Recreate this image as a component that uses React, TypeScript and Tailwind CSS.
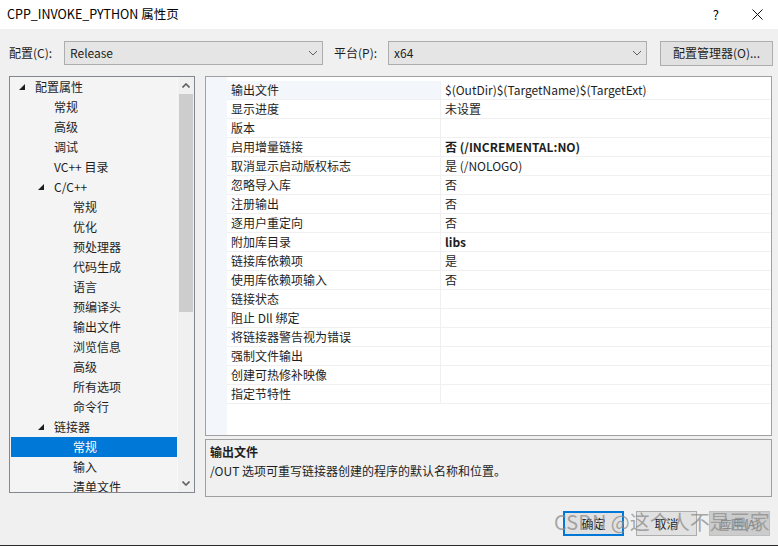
import React from 'react';

const treeItems: { label: string; level: number; open?: boolean; selected?: boolean }[] = [
  { label: '配置属性', level: 0, open: true },
  { label: '常规', level: 1 },
  { label: '高级', level: 1 },
  { label: '调试', level: 1 },
  { label: 'VC++ 目录', level: 1 },
  { label: 'C/C++', level: 1, open: true },
  { label: '常规', level: 2 },
  { label: '优化', level: 2 },
  { label: '预处理器', level: 2 },
  { label: '代码生成', level: 2 },
  { label: '语言', level: 2 },
  { label: '预编译头', level: 2 },
  { label: '输出文件', level: 2 },
  { label: '浏览信息', level: 2 },
  { label: '高级', level: 2 },
  { label: '所有选项', level: 2 },
  { label: '命令行', level: 2 },
  { label: '链接器', level: 1, open: true },
  { label: '常规', level: 2, selected: true },
  { label: '输入', level: 2 },
  { label: '清单文件', level: 2 },
];

const props: { name: string; value: string; bold?: boolean }[] = [
  { name: '输出文件', value: '$(OutDir)$(TargetName)$(TargetExt)' },
  { name: '显示进度', value: '未设置' },
  { name: '版本', value: '' },
  { name: '启用增量链接', value: '否 (/INCREMENTAL:NO)', bold: true },
  { name: '取消显示启动版权标志', value: '是 (/NOLOGO)' },
  { name: '忽略导入库', value: '否' },
  { name: '注册输出', value: '否' },
  { name: '逐用户重定向', value: '否' },
  { name: '附加库目录', value: 'libs', bold: true },
  { name: '链接库依赖项', value: '是' },
  { name: '使用库依赖项输入', value: '否' },
  { name: '链接状态', value: '' },
  { name: '阻止 Dll 绑定', value: '' },
  { name: '将链接器警告视为错误', value: '' },
  { name: '强制文件输出', value: '' },
  { name: '创建可热修补映像', value: '' },
  { name: '指定节特性', value: '' },
];

const Chevron = () => (
  <svg width="10" height="6" viewBox="0 0 10 6" className="text-[#606060]">
    <path d="M1 1 L5 5 L9 1" fill="none" stroke="currentColor" strokeWidth="1" />
  </svg>
);

const Tri = () => (
  <svg width="6" height="6" viewBox="0 0 6 6">
    <path d="M6 0 L6 6 L0 6 Z" fill="#1e1e1e" />
  </svg>
);

function Select({ value, width }: { value: string; width: string }) {
  return (
    <div className={`${width} h-[24px] bg-[#e5e5e5] border border-[#adadad] flex items-center justify-between pl-[5px] pr-[4px]`}>
      <span>{value}</span>
      <Chevron />
    </div>
  );
}

export default function App() {
  return (
    <div className="w-[778px] h-[546px] bg-[#f0f0f0] flex flex-col relative overflow-hidden text-[12px] text-[#1e1e1e] font-['Noto_Sans_CJK_SC','Noto_Sans',sans-serif] border-b border-[#2b2b2b]">
      <div className="h-[29px] bg-white flex items-center justify-between pl-[7px] pr-[15px] shrink-0">
        <span className="text-[12.5px] text-black">CPP_INVOKE_PYTHON 属性页</span>
        <div className="flex items-center gap-[33px] text-black">
          <span className="text-[13px]">?</span>
          <svg width="11" height="11" viewBox="0 0 11 11">
            <path d="M0.5 0.5 L10.5 10.5 M10.5 0.5 L0.5 10.5" stroke="#111" strokeWidth="1" />
          </svg>
        </div>
      </div>

      <div className="flex items-center mt-[11px] h-[26px] shrink-0">
        <span className="ml-[9px] w-[55px]">配置(C):</span>
        <Select value="Release" width="w-[259px]" />
        <span className="ml-[11px] w-[54px]">平台(P):</span>
        <Select value="x64" width="w-[259px]" />
        <div className="ml-[13px] w-[113px] h-[25px] bg-[#e1e1e1] border border-[#adadad] flex items-center justify-center">
          配置管理器(O)...
        </div>
      </div>

      <div className="flex mt-[10px] shrink-0">
        <div className="ml-[9px] w-[186px] h-[417px] border border-[#828790] bg-[#f4f4f4] flex">
          <div className="flex-1 flex flex-col overflow-hidden pl-[1px]">
            {treeItems.map((t, i) => (
              <div
                key={i}
                className={`h-[20px] shrink-0 flex items-center ${t.selected ? 'bg-[#0078d7] text-white' : ''}`}
              >
                <span
                  className={`flex items-center justify-end w-[12px] ${
                    t.level === 0 ? 'ml-[2px]' : t.level === 1 ? 'ml-[21px]' : 'ml-[40px]'
                  }`}
                >
                  {t.open ? <Tri /> : null}
                </span>
                <span className="ml-[10px] whitespace-nowrap">{t.label}</span>
              </div>
            ))}
          </div>
          <div className="w-[17px] bg-[#f0f0f0] flex flex-col border-l border-[#f8f8f8]">
            <div className="h-[17px] flex items-center justify-center">
              <svg width="8" height="5" viewBox="0 0 8 5">
                <path d="M0.5 4.5 L4 1 L7.5 4.5" fill="none" stroke="#606060" strokeWidth="1.6" />
              </svg>
            </div>
            <div className="h-[218px] mx-[1px] bg-[#cdcdcd]" />
            <div className="flex-1" />
            <div className="h-[17px] flex items-center justify-center">
              <svg width="8" height="5" viewBox="0 0 8 5">
                <path d="M0.5 0.5 L4 4 L7.5 0.5" fill="none" stroke="#606060" strokeWidth="1.6" />
              </svg>
            </div>
          </div>
        </div>

        <div className="ml-[10px] w-[567px] flex flex-col gap-[3px]">
          <div className="h-[360px] border border-[#a0a0a0] bg-white flex">
            <div className="w-[21px] bg-[#f3f6fb] shrink-0" />
            <div className="flex-1 flex flex-col pt-[4px]">
              {props.map((p, i) => (
                <div key={i} className="h-[19px] flex border-b border-[#f0f0f0] shrink-0">
                  <div className={`w-[214px] border-r border-[#f0f0f0] pl-[4px] flex items-center ${i === 0 ? 'bg-[#f3f6fb]' : ''}`}>
                    {p.name}
                  </div>
                  <div className={`flex-1 pl-[4px] flex items-center ${p.bold ? 'font-bold' : ''}`}>{p.value}</div>
                </div>
              ))}
            </div>
          </div>
          <div className="h-[58px] border border-[#a0a0a0] bg-[#f0f0f0] px-[4px] pt-[2px] flex flex-col">
            <div className="font-bold h-[19px] flex items-center">输出文件</div>
            <div className="h-[19px] flex items-center">/OUT 选项可重写链接器创建的程序的默认名称和位置。</div>
          </div>
        </div>
      </div>

      <div className="flex justify-end gap-[12px] mr-[8px] mt-[14px]">
        <div className="w-[61px] h-[25px] border-2 border-[#0078d7] bg-[#e1e1e1] flex items-center justify-center">确定</div>
        <div className="w-[61px] h-[25px] border border-[#adadad] bg-[#e1e1e1] flex items-center justify-center">取消</div>
        <div className="w-[61px] h-[25px] border border-[#bfbfbf] bg-[#cccccc] flex items-center justify-center text-[#838383]">应用(A)</div>
      </div>

      <div className="absolute left-[554px] top-[508px] text-[20px] leading-[28px] text-[#8c8c8c]/75 whitespace-nowrap pointer-events-none">
        CSDN @这个人不是画家
      </div>
    </div>
  );
}
